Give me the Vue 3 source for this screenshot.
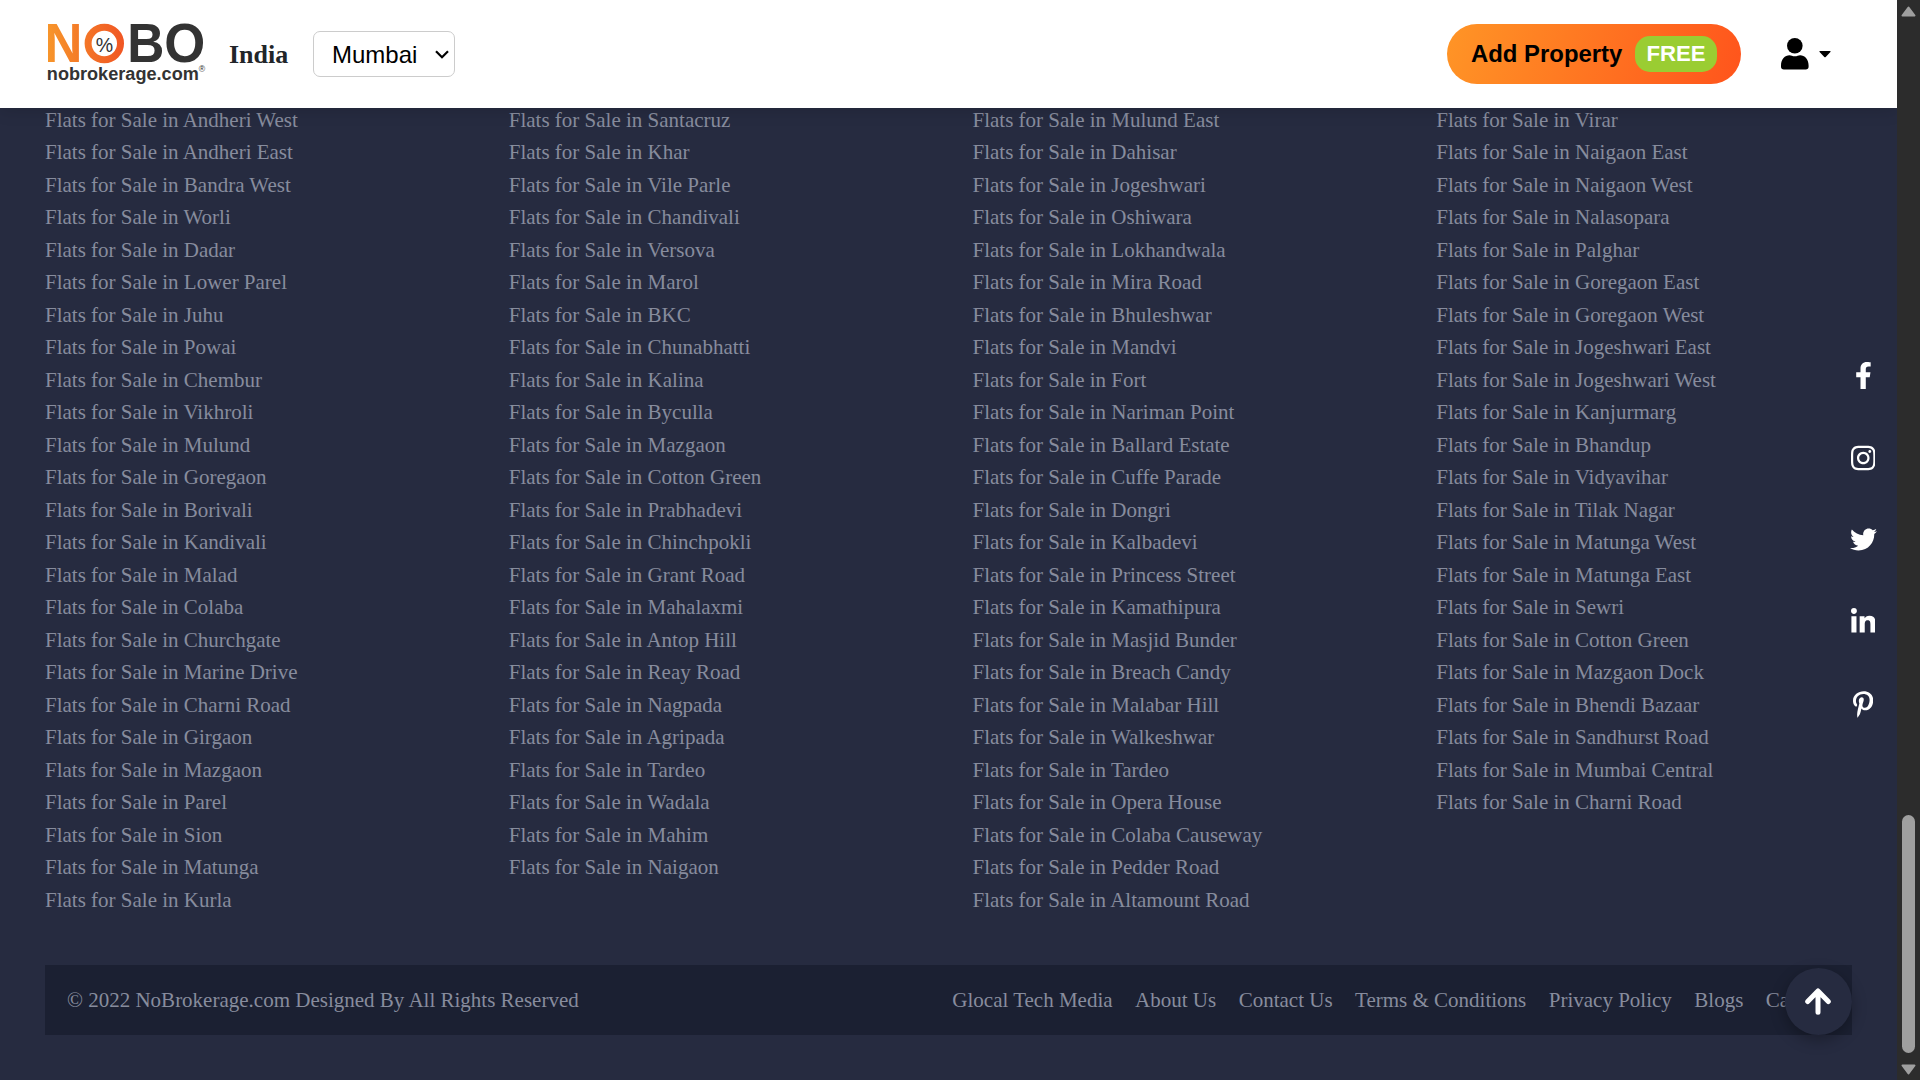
<script setup>
const columns = [
  ['Andheri West', 'Andheri East', 'Bandra West', 'Worli', 'Dadar', 'Lower Parel', 'Juhu', 'Powai', 'Chembur', 'Vikhroli', 'Mulund', 'Goregaon', 'Borivali', 'Kandivali', 'Malad', 'Colaba', 'Churchgate', 'Marine Drive', 'Charni Road', 'Girgaon', 'Mazgaon', 'Parel', 'Sion', 'Matunga', 'Kurla'],
  ['Santacruz', 'Khar', 'Vile Parle', 'Chandivali', 'Versova', 'Marol', 'BKC', 'Chunabhatti', 'Kalina', 'Byculla', 'Mazgaon', 'Cotton Green', 'Prabhadevi', 'Chinchpokli', 'Grant Road', 'Mahalaxmi', 'Antop Hill', 'Reay Road', 'Nagpada', 'Agripada', 'Tardeo', 'Wadala', 'Mahim', 'Naigaon'],
  ['Mulund East', 'Dahisar', 'Jogeshwari', 'Oshiwara', 'Lokhandwala', 'Mira Road', 'Bhuleshwar', 'Mandvi', 'Fort', 'Nariman Point', 'Ballard Estate', 'Cuffe Parade', 'Dongri', 'Kalbadevi', 'Princess Street', 'Kamathipura', 'Masjid Bunder', 'Breach Candy', 'Malabar Hill', 'Walkeshwar', 'Tardeo', 'Opera House', 'Colaba Causeway', 'Pedder Road', 'Altamount Road'],
  ['Virar', 'Naigaon East', 'Naigaon West', 'Nalasopara', 'Palghar', 'Goregaon East', 'Goregaon West', 'Jogeshwari East', 'Jogeshwari West', 'Kanjurmarg', 'Bhandup', 'Vidyavihar', 'Tilak Nagar', 'Matunga West', 'Matunga East', 'Sewri', 'Cotton Green', 'Mazgaon Dock', 'Bhendi Bazaar', 'Sandhurst Road', 'Mumbai Central', 'Charni Road'],
]
const footerLinks = ['Glocal Tech Media', 'About Us', 'Contact Us', 'Terms & Conditions', 'Privacy Policy', 'Blogs', 'Careers']
const socials = [
  { name: 'Facebook', size: 27, box: '0 0 320 512', d: 'M279.14 288l14.22-92.66h-88.91v-60.13c0-25.35 12.42-50.06 52.24-50.06h40.42V6.26S260.43 0 225.36 0c-73.22 0-121.08 44.38-121.08 124.72v70.62H22.89V288h81.39v224h100.17V288z' },
  { name: 'Instagram', size: 28, box: '0 0 448 512', d: 'M224.1 141c-63.6 0-114.9 51.3-114.9 114.9s51.3 114.9 114.9 114.9S339 319.5 339 255.9 287.7 141 224.1 141zm0 189.6c-41.1 0-74.7-33.5-74.7-74.7s33.5-74.7 74.7-74.7 74.7 33.5 74.7 74.7-33.6 74.7-74.7 74.7zm146.4-194.3c0 14.9-12 26.8-26.8 26.8-14.9 0-26.8-12-26.8-26.8s12-26.8 26.8-26.8 26.8 12 26.8 26.8zm76.1 27.2c-1.7-35.9-9.9-67.7-36.2-93.9-26.2-26.2-58-34.4-93.9-36.2-37-2.1-147.9-2.1-184.9 0-35.8 1.7-67.6 9.9-93.9 36.1s-34.4 58-36.2 93.9c-2.1 37-2.1 147.9 0 184.9 1.7 35.9 9.9 67.7 36.2 93.9s58 34.4 93.9 36.2c37 2.1 147.9 2.1 184.9 0 35.9-1.7 67.7-9.9 93.9-36.2 26.2-26.2 34.4-58 36.2-93.9 2.1-37 2.1-147.8 0-184.8zM398.8 388c-7.8 19.6-22.9 34.7-42.6 42.6-29.5 11.7-99.5 9-132.1 9s-102.7 2.6-132.1-9c-19.6-7.8-34.7-22.9-42.6-42.6-11.7-29.5-9-99.5-9-132.1s-2.6-102.7 9-132.1c7.8-19.6 22.9-34.7 42.6-42.6 29.5-11.7 99.5-9 132.1-9s102.7-2.6 132.1 9c19.6 7.8 34.7 22.9 42.6 42.6 11.7 29.5 9 99.5 9 132.1s2.7 102.7-9 132.1z' },
  { name: 'Twitter', size: 27, box: '0 0 512 512', d: 'M459.37 151.716c.325 4.548.325 9.097.325 13.645 0 138.72-105.583 298.558-298.558 298.558-59.452 0-114.68-17.219-161.137-47.106 8.447.974 16.568 1.299 25.34 1.299 49.055 0 94.213-16.568 130.274-44.832-46.132-.975-84.792-31.188-98.112-72.772 6.498.974 12.995 1.624 19.818 1.624 9.421 0 18.843-1.3 27.614-3.573-48.081-9.747-84.143-51.98-84.143-102.985v-1.299c13.969 7.797 30.214 12.67 47.431 13.319-28.264-18.843-46.781-51.005-46.781-87.391 0-19.492 5.197-37.36 14.294-52.954 51.655 63.675 129.3 105.258 216.365 109.807-1.624-7.797-2.599-15.918-2.599-24.04 0-57.828 46.782-104.934 104.934-104.934 30.213 0 57.502 12.67 76.67 33.137 23.715-4.548 46.456-13.32 66.599-25.34-7.798 24.366-24.366 44.833-46.132 57.827 21.117-2.273 41.584-8.122 60.426-16.243-14.292 20.791-32.161 39.308-52.628 54.253z' },
  { name: 'LinkedIn', size: 28, box: '0 0 448 512', d: 'M100.28 448H7.4V148.9h92.88zM53.79 108.1C24.09 108.1 0 83.5 0 53.8a53.79 53.79 0 0 1 107.58 0c0 29.7-24.1 54.3-53.79 54.3zM447.9 448h-92.68V302.4c0-34.7-.7-79.2-48.29-79.2-48.29 0-55.69 37.7-55.69 76.7V448h-92.78V148.9h89.08v40.8h1.3c12.4-23.5 42.69-48.3 87.88-48.3 94 0 111.28 61.9 111.28 142.3V448z' },
  { name: 'Pinterest', size: 27, box: '0 0 384 512', d: 'M204 6.5C101.4 6.5 0 74.9 0 185.6 0 256 39.6 296 63.6 296c9.9 0 15.6-27.6 15.6-35.4 0-9.3-23.7-29.1-23.7-67.8 0-80.4 61.2-137.4 140.4-137.4 68.1 0 118.5 38.7 118.5 109.8 0 53.1-21.3 152.7-90.3 152.7-24.9 0-46.2-18-46.2-43.8 0-37.8 26.4-74.4 26.4-113.4 0-66.2-93.9-54.2-93.9 25.8 0 16.8 2.1 35.4 9.6 50.7-13.8 59.4-42 147.9-42 209.1 0 18.9 2.7 37.5 4.5 56.4 3.4 3.8 1.7 3.4 6.9 1.5 50.4-69 48.6-82.5 71.4-172.8 12.3 23.4 44.1 36 69.3 36 106.2 0 153.9-103.5 153.9-196.8C384 71.3 298.2 6.5 204 6.5z' },
]
</script>

<template>
  <div class="window">
    <div class="page">
      <header class="header">
        <svg class="logo" width="160" height="66" viewBox="0 0 160 66" aria-label="Nobo">
          <defs>
            <linearGradient id="brand" gradientUnits="userSpaceOnUse" x1="0" y1="0" x2="78" y2="0">
              <stop offset="0" stop-color="#f7952b" />
              <stop offset="1" stop-color="#f05423" />
            </linearGradient>
          </defs>
          <g class="mark">
            <text x="-3.4" y="40.4" font-size="54.7" textLength="37.9" lengthAdjust="spacingAndGlyphs">N</text>
            <text x="79.3" y="40.4" font-size="54.7" textLength="37.1" lengthAdjust="spacingAndGlyphs">B</text>
            <text x="116.2" y="40.4" font-size="54.7" textLength="41" lengthAdjust="spacingAndGlyphs">O</text>
            <text x="-1.2" y="58" font-size="17.5" textLength="152" lengthAdjust="spacingAndGlyphs">nobrokerage.com</text>
          </g>
          <circle cx="56.3" cy="21.5" r="16.2" fill="#fff" stroke="url(#brand)" stroke-width="7" />
          <text x="47.8" y="29.8" font-size="21" textLength="17.4" lengthAdjust="spacingAndGlyphs">%</text>
          <text x="150.7" y="49.6" font-size="8.7">®</text>
        </svg>
        <strong class="country">India</strong>
        <div class="city">
          <span>Mumbai</span>
          <svg width="14" height="9" viewBox="0 0 14 9"><path d="M1 1.2l6 6 6-6" fill="none" stroke="#000" stroke-width="2.2" /></svg>
        </div>
        <div class="add">
          <span>Add Property</span>
          <span class="free">FREE</span>
        </div>
        <div class="account">
          <svg width="28" height="32" viewBox="0 0 28 32">
            <circle cx="13.8" cy="7.8" r="7.8" />
            <path d="M0 27.5c0-6.5 4-10.3 8.5-10.3 1.7 0 3 1.1 5.3 1.1s3.6-1.1 5.3-1.1c4.5 0 8.5 3.8 8.5 10.3v1.2c0 1.7-1.2 2.8-2.8 2.8h-22C1.2 31.5 0 30.4 0 28.7z" />
          </svg>
          <svg width="12" height="7" viewBox="0 0 12 7"><path d="M.8 0h10.4q.8.4.2 1L6.7 5.9q-.7.6-1.4 0L.6 1Q0 .4.8 0z" /></svg>
        </div>
      </header>

      <main class="content">
        <div class="areas">
          <ul v-for="(column, i) in columns" :key="i">
            <li v-for="area in column" :key="area">Flats for Sale in {{ area }}</li>
          </ul>
        </div>
        <footer class="bar">
          <span>© 2022 NoBrokerage.com Designed By All Rights Reserved</span>
          <nav>
            <a v-for="link in footerLinks" :key="link">{{ link }}</a>
          </nav>
        </footer>
      </main>

      <div class="socials">
        <a v-for="s in socials" :key="s.name" :aria-label="s.name">
          <svg :height="s.size" :viewBox="s.box"><path :d="s.d" /></svg>
        </a>
      </div>

      <button class="to-top" aria-label="Back to top">
        <svg width="26" height="27" viewBox="0 0 26 27"><path d="M2.7 13.5L13 3l10.3 10.5M13 4v20.3" /></svg>
      </button>
    </div>

    <aside class="scrollbar">
      <svg width="15" height="11" viewBox="0 0 15 11"><path d="M7.5 1.5L13.5 9.5h-12z" /></svg>
      <div class="thumb"></div>
      <svg width="15" height="11" viewBox="0 0 15 11"><path d="M7.5 9.5L13.5 1.5h-12z" /></svg>
    </aside>
  </div>
</template>

<style>
body {
  background: #262b40;
}
</style>

<style scoped>
.window {
  display: flex;
  width: 1920px;
  height: 1080px;
  overflow: hidden;
  font-family: "Liberation Serif", serif;
}
.page {
  position: relative;
  width: 1897px;
  height: 1080px;
  overflow: hidden;
  background: #262b40;
}
.header {
  position: relative;
  z-index: 2;
  display: flex;
  align-items: center;
  box-sizing: border-box;
  height: 108px;
  padding: 0 66px 0 48px;
  background: #fff;
  box-shadow: 0 2px 16px rgba(0, 0, 0, 0.15);
}
.logo {
  flex: none;
  overflow: visible;
  margin-top: 2px;
}
.logo text {
  font-family: "Liberation Sans", sans-serif;
  fill: #333;
}
.logo .mark text {
  font-weight: 700;
}
.logo .mark text:first-child {
  fill: url(#brand);
}
.country {
  margin-left: 21px;
  width: 84px;
  padding-top: 1px;
  font-size: 26px;
  color: #212529;
}
.city {
  display: flex;
  align-items: center;
  justify-content: space-between;
  box-sizing: border-box;
  width: 142px;
  height: 46px;
  padding: 0 5px 0 18px;
  border: 1px solid #ccc;
  border-radius: 7px;
  font: 24px "Liberation Sans", sans-serif;
}
.city span {
  padding-top: 2px;
}
.add {
  display: flex;
  align-items: center;
  justify-content: space-between;
  box-sizing: border-box;
  width: 294px;
  height: 60px;
  margin-left: auto;
  padding: 0 24px;
  border-radius: 30px;
  background: linear-gradient(107deg, #ff9526, #ff541c);
  font: 700 23.9px "Liberation Sans", sans-serif;
}
.free {
  width: 82px;
  height: 36px;
  border-radius: 15px;
  background: #9acd32;
  color: #fff;
  font-size: 22.2px;
  line-height: 35px;
  text-align: center;
}
.account {
  display: flex;
  align-items: center;
  gap: 10px;
  margin-left: 40px;
}
.content {
  margin-top: -4.2px;
  padding: 0 45px;
  font-size: 21px;
  color: #878c9d;
}
.areas {
  display: grid;
  grid-template-columns: repeat(4, 1fr);
  column-gap: 48px;
  height: 861.2px;
}
ul {
  margin: 0;
  padding: 0;
  list-style: none;
}
li {
  height: 32.5px;
  line-height: 32.5px;
  white-space: nowrap;
}
.bar {
  display: flex;
  align-items: center;
  justify-content: space-between;
  height: 70px;
  padding: 0 22px;
  background: #1b2032;
}
nav {
  display: flex;
  gap: 22.5px;
}
.socials {
  position: absolute;
  z-index: 1;
  top: 334px;
  right: 14px;
  width: 40px;
}
.socials a {
  display: flex;
  align-items: center;
  justify-content: center;
  height: 82.4px;
}
.socials svg {
  fill: #fff;
}
.to-top {
  position: absolute;
  z-index: 1;
  top: 968px;
  right: 45px;
  display: flex;
  align-items: center;
  justify-content: center;
  width: 67px;
  height: 67px;
  padding: 0 1px 0 0;
  border: 0;
  border-radius: 50%;
  background: #262b40;
  box-shadow: 0 5px 15px rgba(0, 0, 0, 0.3);
}
.to-top path {
  fill: none;
  stroke: #fff;
  stroke-width: 5;
  stroke-linecap: round;
  stroke-linejoin: round;
}
.scrollbar {
  display: flex;
  flex-direction: column;
  align-items: center;
  box-sizing: border-box;
  width: 23px;
  height: 1080px;
  padding: 6px 0 5px;
  background: #2c2c2c;
}
.scrollbar path {
  fill: #9f9f9f;
  stroke: #9f9f9f;
  stroke-width: 2;
  stroke-linejoin: round;
}
.thumb {
  width: 13px;
  height: 238px;
  margin: auto 0 11px;
  border-radius: 7px;
  background: #9f9f9f;
}
</style>
